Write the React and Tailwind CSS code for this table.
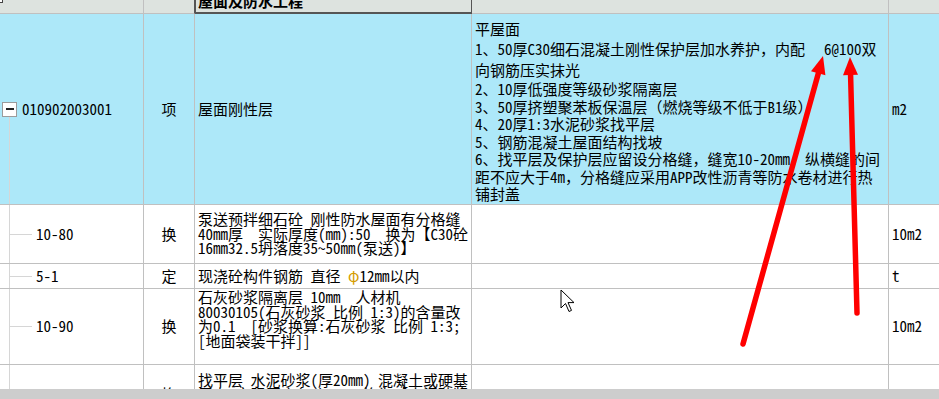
import React from "react";

const cols = "grid grid-cols-[144px_51px_277px_417px_50px]";

function TreeCell({ code }) {
  return (
    <div className="flex border-r border-b border-[#c0c0c0]">
      <div className="ml-[9px] flex items-center border-l border-[#d6d6d6]">
        <div className="h-px w-[22px] bg-[#d6d6d6]" />
        <span className="ml-[4px] whitespace-nowrap">{code}</span>
      </div>
    </div>
  );
}

function TypeCell({ children }) {
  return (
    <div className="flex items-center justify-center border-r border-b border-[#c0c0c0]">{children}</div>
  );
}

function DescCell({ lines }) {
  return (
    <div className="flex items-center overflow-hidden border-r border-b border-[#c0c0c0] pl-[3px]">
      <div>
        {lines.map((l, i) => (
          <div key={i} className="h-[14.5px] whitespace-pre">{l}</div>
        ))}
      </div>
    </div>
  );
}

function UnitCell({ children }) {
  return <div className="flex items-center border-b border-[#c0c0c0] pl-[3px]">{children}</div>;
}

const spec = [
  "2、10厚低强度等级砂浆隔离层",
  "3、50厚挤塑聚苯板保温层（燃烧等级不低于B1级）",
  "4、20厚1:3水泥砂浆找平层",
  "5、钢筋混凝土屋面结构找坡",
  "6、找平层及保护层应留设分格缝，缝宽10-20mm，纵横缝的间",
  "距不应大于4m，分格缝应采用APP改性沥青等防水卷材进行热",
  "铺封盖",
];

export default function App() {
  return (
    <div className="relative h-[399px] w-[939px] overflow-hidden bg-white font-['Noto_Sans_Mono_CJK_SC','Noto_Sans_CJK_SC',sans-serif] text-[15px] leading-[14.5px] text-black">
      <div className="h-[389px] overflow-hidden">
        {/* header */}
        <div className={`${cols} h-[14px] bg-[#dde3df]`}>
          <div className="border-r border-b border-[#c0c0c0]">
            <div className="h-[3px] w-[3px] border-r border-b border-[#444] bg-white" />
          </div>
          <div className="border-r border-b border-r-[#555] border-b-[#c0c0c0]" />
          <div className="overflow-hidden border-r border-b border-[#555] pl-[3px] font-bold shadow-[inset_1px_0_0_#555,inset_0_-1px_0_#555]">
            <div className="-mt-[7px] whitespace-nowrap leading-[15px]">屋面及防水工程</div>
          </div>
          <div className="border-r border-b border-[#c0c0c0]" />
          <div className="border-b border-[#c0c0c0]" />
        </div>

        {/* main item */}
        <div className={`${cols} h-[191px] bg-[#ade8f9]`}>
          <div className="relative flex items-center border-r border-b border-[#c0c0c0]">
            <div className="ml-[2px] flex h-[15px] w-[15px] items-center justify-center border border-[#9c9c9c] bg-white">
              <div className="h-[2px] w-[8px] bg-[#222]" />
            </div>
            <span className="ml-[5px] whitespace-nowrap">010902003001</span>
            <div className="absolute bottom-0 left-[9px] top-[calc(50%+8px)] w-px bg-[#d6d6d6]" />
          </div>
          <TypeCell>项</TypeCell>
          <div className="flex items-center border-r border-b border-[#c0c0c0] pl-[3px]">屋面刚性层</div>
          <div className="overflow-hidden border-r border-b border-[#c0c0c0] pl-[3px] pt-[5px]">
            <div className="h-[19px] leading-[19px]">平屋面</div>
            <div className="flex h-[22px] items-center whitespace-nowrap">
              <span>1、50厚C30细石混凝土刚性保护层加水养护，内配</span>
              <span className="w-[19px]" />
              <span>6@100双</span>
            </div>
            <div className="h-[20px] leading-[20px]">向钢筋压实抹光</div>
            {spec.map((l) => (
              <div key={l} className="h-[17.5px] whitespace-nowrap leading-[17.5px]">{l}</div>
            ))}
          </div>
          <UnitCell>m2</UnitCell>
        </div>

        <div className={`${cols} h-[59px]`}>
          <TreeCell code="10-80" />
          <TypeCell>换</TypeCell>
          <DescCell
            lines={[
              "泵送预拌细石砼 刚性防水屋面有分格缝",
              "40mm厚  实际厚度(mm):50  换为【C30砼",
              "16mm32.5坍落度35~50mm(泵送)】",
            ]}
          />
          <div className="border-r border-b border-[#c0c0c0]" />
          <UnitCell>10m2</UnitCell>
        </div>

        <div className={`${cols} h-[25px]`}>
          <TreeCell code="5-1" />
          <TypeCell>定</TypeCell>
          <div className="flex items-center whitespace-pre border-r border-b border-[#c0c0c0] pl-[3px]">
            现浇砼构件钢筋 直径 <span className="text-[#d49c00]">φ</span>12mm以内
          </div>
          <div className="border-r border-b border-[#c0c0c0]" />
          <UnitCell>t</UnitCell>
        </div>

        <div className={`${cols} h-[76px]`}>
          <TreeCell code="10-90" />
          <TypeCell>换</TypeCell>
          <DescCell
            lines={[
              "石灰砂浆隔离层 10mm  人材机",
              "80030105(石灰砂浆 比例 1:3)的含量改",
              "为0.1  [砂浆换算:石灰砂浆 比例 1:3;",
              "[地面袋装干拌]]",
              "",
            ]}
          />
          <div className="border-r border-b border-[#c0c0c0]" />
          <UnitCell>10m2</UnitCell>
        </div>

        <div className={`${cols} h-[60px]`}>
          <TreeCell code="10-88" />
          <TypeCell>换</TypeCell>
          <DescCell
            lines={[
              "找平层 水泥砂浆(厚20mm) 混凝土或硬基",
              "层上 实际厚度(mm):30  换为【水泥砂浆",
              "比例 1:2.5】",
            ]}
          />
          <div className="border-r border-b border-[#c0c0c0]" />
          <UnitCell>10m2</UnitCell>
        </div>
      </div>
      <div className="h-[10px] bg-[#cdcdcd]" />

      <svg className="pointer-events-none absolute left-0 top-0" width="939" height="399" viewBox="0 0 939 399">
        <line x1="743" y1="344" x2="819" y2="71" stroke="#ff0000" strokeWidth="5.5" strokeLinecap="round" />
        <polygon points="823,56 825.4,75.3 811,71.3" fill="#ff0000" />
        <line x1="857" y1="313" x2="850.5" y2="72" stroke="#ff0000" strokeWidth="5.5" strokeLinecap="round" />
        <polygon points="850,57 858,74.8 843,75.2" fill="#ff0000" />
        <path
          d="M561 290 L561 308 L565.5 303.5 L569 311.5 L571.5 310.4 L568 302.6 L574 302.6 Z"
          fill="#ffffff"
          stroke="#000000"
          strokeWidth="1"
          strokeLinejoin="round"
        />
      </svg>
    </div>
  );
}
